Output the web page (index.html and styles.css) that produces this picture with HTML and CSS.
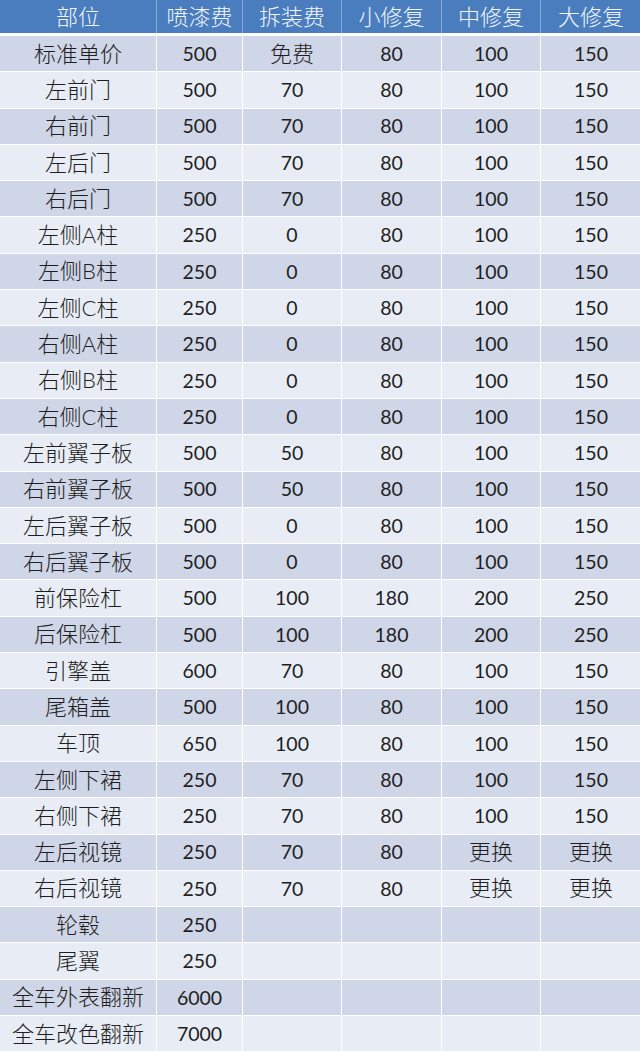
FILE: index.html
```html
<!DOCTYPE html>
<html lang="zh-CN">
<head>
<meta charset="utf-8">
<title>钣金喷漆价目表</title>
<link rel="stylesheet" href="styles.css">
</head>
<body>
<div class="sheet">
  <div class="row head">
    <div class="c">部位</div><div class="c">喷漆费</div><div class="c">拆装费</div><div class="c">小修复</div><div class="c">中修复</div><div class="c">大修复</div>
  </div>
  <div class="body">
    <div class="row"><div class="c">标准单价</div><div class="c n">500</div><div class="c">免费</div><div class="c n">80</div><div class="c n">100</div><div class="c n">150</div></div>
    <div class="row"><div class="c">左前门</div><div class="c n">500</div><div class="c n">70</div><div class="c n">80</div><div class="c n">100</div><div class="c n">150</div></div>
    <div class="row"><div class="c">右前门</div><div class="c n">500</div><div class="c n">70</div><div class="c n">80</div><div class="c n">100</div><div class="c n">150</div></div>
    <div class="row"><div class="c">左后门</div><div class="c n">500</div><div class="c n">70</div><div class="c n">80</div><div class="c n">100</div><div class="c n">150</div></div>
    <div class="row"><div class="c">右后门</div><div class="c n">500</div><div class="c n">70</div><div class="c n">80</div><div class="c n">100</div><div class="c n">150</div></div>
    <div class="row"><div class="c">左侧A柱</div><div class="c n">250</div><div class="c n">0</div><div class="c n">80</div><div class="c n">100</div><div class="c n">150</div></div>
    <div class="row"><div class="c">左侧B柱</div><div class="c n">250</div><div class="c n">0</div><div class="c n">80</div><div class="c n">100</div><div class="c n">150</div></div>
    <div class="row"><div class="c">左侧C柱</div><div class="c n">250</div><div class="c n">0</div><div class="c n">80</div><div class="c n">100</div><div class="c n">150</div></div>
    <div class="row"><div class="c">右侧A柱</div><div class="c n">250</div><div class="c n">0</div><div class="c n">80</div><div class="c n">100</div><div class="c n">150</div></div>
    <div class="row"><div class="c">右侧B柱</div><div class="c n">250</div><div class="c n">0</div><div class="c n">80</div><div class="c n">100</div><div class="c n">150</div></div>
    <div class="row"><div class="c">右侧C柱</div><div class="c n">250</div><div class="c n">0</div><div class="c n">80</div><div class="c n">100</div><div class="c n">150</div></div>
    <div class="row"><div class="c">左前翼子板</div><div class="c n">500</div><div class="c n">50</div><div class="c n">80</div><div class="c n">100</div><div class="c n">150</div></div>
    <div class="row"><div class="c">右前翼子板</div><div class="c n">500</div><div class="c n">50</div><div class="c n">80</div><div class="c n">100</div><div class="c n">150</div></div>
    <div class="row"><div class="c">左后翼子板</div><div class="c n">500</div><div class="c n">0</div><div class="c n">80</div><div class="c n">100</div><div class="c n">150</div></div>
    <div class="row"><div class="c">右后翼子板</div><div class="c n">500</div><div class="c n">0</div><div class="c n">80</div><div class="c n">100</div><div class="c n">150</div></div>
    <div class="row"><div class="c">前保险杠</div><div class="c n">500</div><div class="c n">100</div><div class="c n">180</div><div class="c n">200</div><div class="c n">250</div></div>
    <div class="row"><div class="c">后保险杠</div><div class="c n">500</div><div class="c n">100</div><div class="c n">180</div><div class="c n">200</div><div class="c n">250</div></div>
    <div class="row"><div class="c">引擎盖</div><div class="c n">600</div><div class="c n">70</div><div class="c n">80</div><div class="c n">100</div><div class="c n">150</div></div>
    <div class="row"><div class="c">尾箱盖</div><div class="c n">500</div><div class="c n">100</div><div class="c n">80</div><div class="c n">100</div><div class="c n">150</div></div>
    <div class="row"><div class="c">车顶</div><div class="c n">650</div><div class="c n">100</div><div class="c n">80</div><div class="c n">100</div><div class="c n">150</div></div>
    <div class="row"><div class="c">左侧下裙</div><div class="c n">250</div><div class="c n">70</div><div class="c n">80</div><div class="c n">100</div><div class="c n">150</div></div>
    <div class="row"><div class="c">右侧下裙</div><div class="c n">250</div><div class="c n">70</div><div class="c n">80</div><div class="c n">100</div><div class="c n">150</div></div>
    <div class="row"><div class="c">左后视镜</div><div class="c n">250</div><div class="c n">70</div><div class="c n">80</div><div class="c">更换</div><div class="c">更换</div></div>
    <div class="row"><div class="c">右后视镜</div><div class="c n">250</div><div class="c n">70</div><div class="c n">80</div><div class="c">更换</div><div class="c">更换</div></div>
    <div class="row"><div class="c">轮毂</div><div class="c n">250</div><div class="c"></div><div class="c"></div><div class="c"></div><div class="c"></div></div>
    <div class="row"><div class="c">尾翼</div><div class="c n">250</div><div class="c"></div><div class="c"></div><div class="c"></div><div class="c"></div></div>
    <div class="row"><div class="c">全车外表翻新</div><div class="c n">6000</div><div class="c"></div><div class="c"></div><div class="c"></div><div class="c"></div></div>
    <div class="row"><div class="c">全车改色翻新</div><div class="c n">7000</div><div class="c"></div><div class="c"></div><div class="c"></div><div class="c"></div></div>
  </div>
</div>
</body>
</html>
```
FILE: styles.css
```css
html, body {
  margin: 0;
  padding: 0;
  background: #ffffff;
}

.sheet {
  width: 640px;
  height: 1052px;
  overflow: hidden;
  display: flex;
  flex-direction: column;
  gap: 3px;
  font-family: Lato, "Noto Sans CJK SC", sans-serif;
  font-size: 22px;
  font-weight: 300;
  color: #1e1e22;
}

.row {
  display: grid;
  grid-template-columns: 156px 85px 98px 99px 98px 100px;
  column-gap: 1px;
  height: 35.3px;
}

.c {
  display: flex;
  align-items: center;
  justify-content: center;
  white-space: nowrap;
  line-height: 1;
}

.n {
  font-size: 19.5px;
  font-weight: 400;
}

.head {
  height: 33px;
  background: #89a9d6;
}

.head .c {
  background: #4a7dbd;
  color: #f2f5fb;
}

.body {
  display: flex;
  flex-direction: column;
  gap: 1px;
}

.body .row:nth-child(odd) .c {
  background: #cfd6e7;
}

.body .row:nth-child(even) .c {
  background: #e8edf5;
}
```
